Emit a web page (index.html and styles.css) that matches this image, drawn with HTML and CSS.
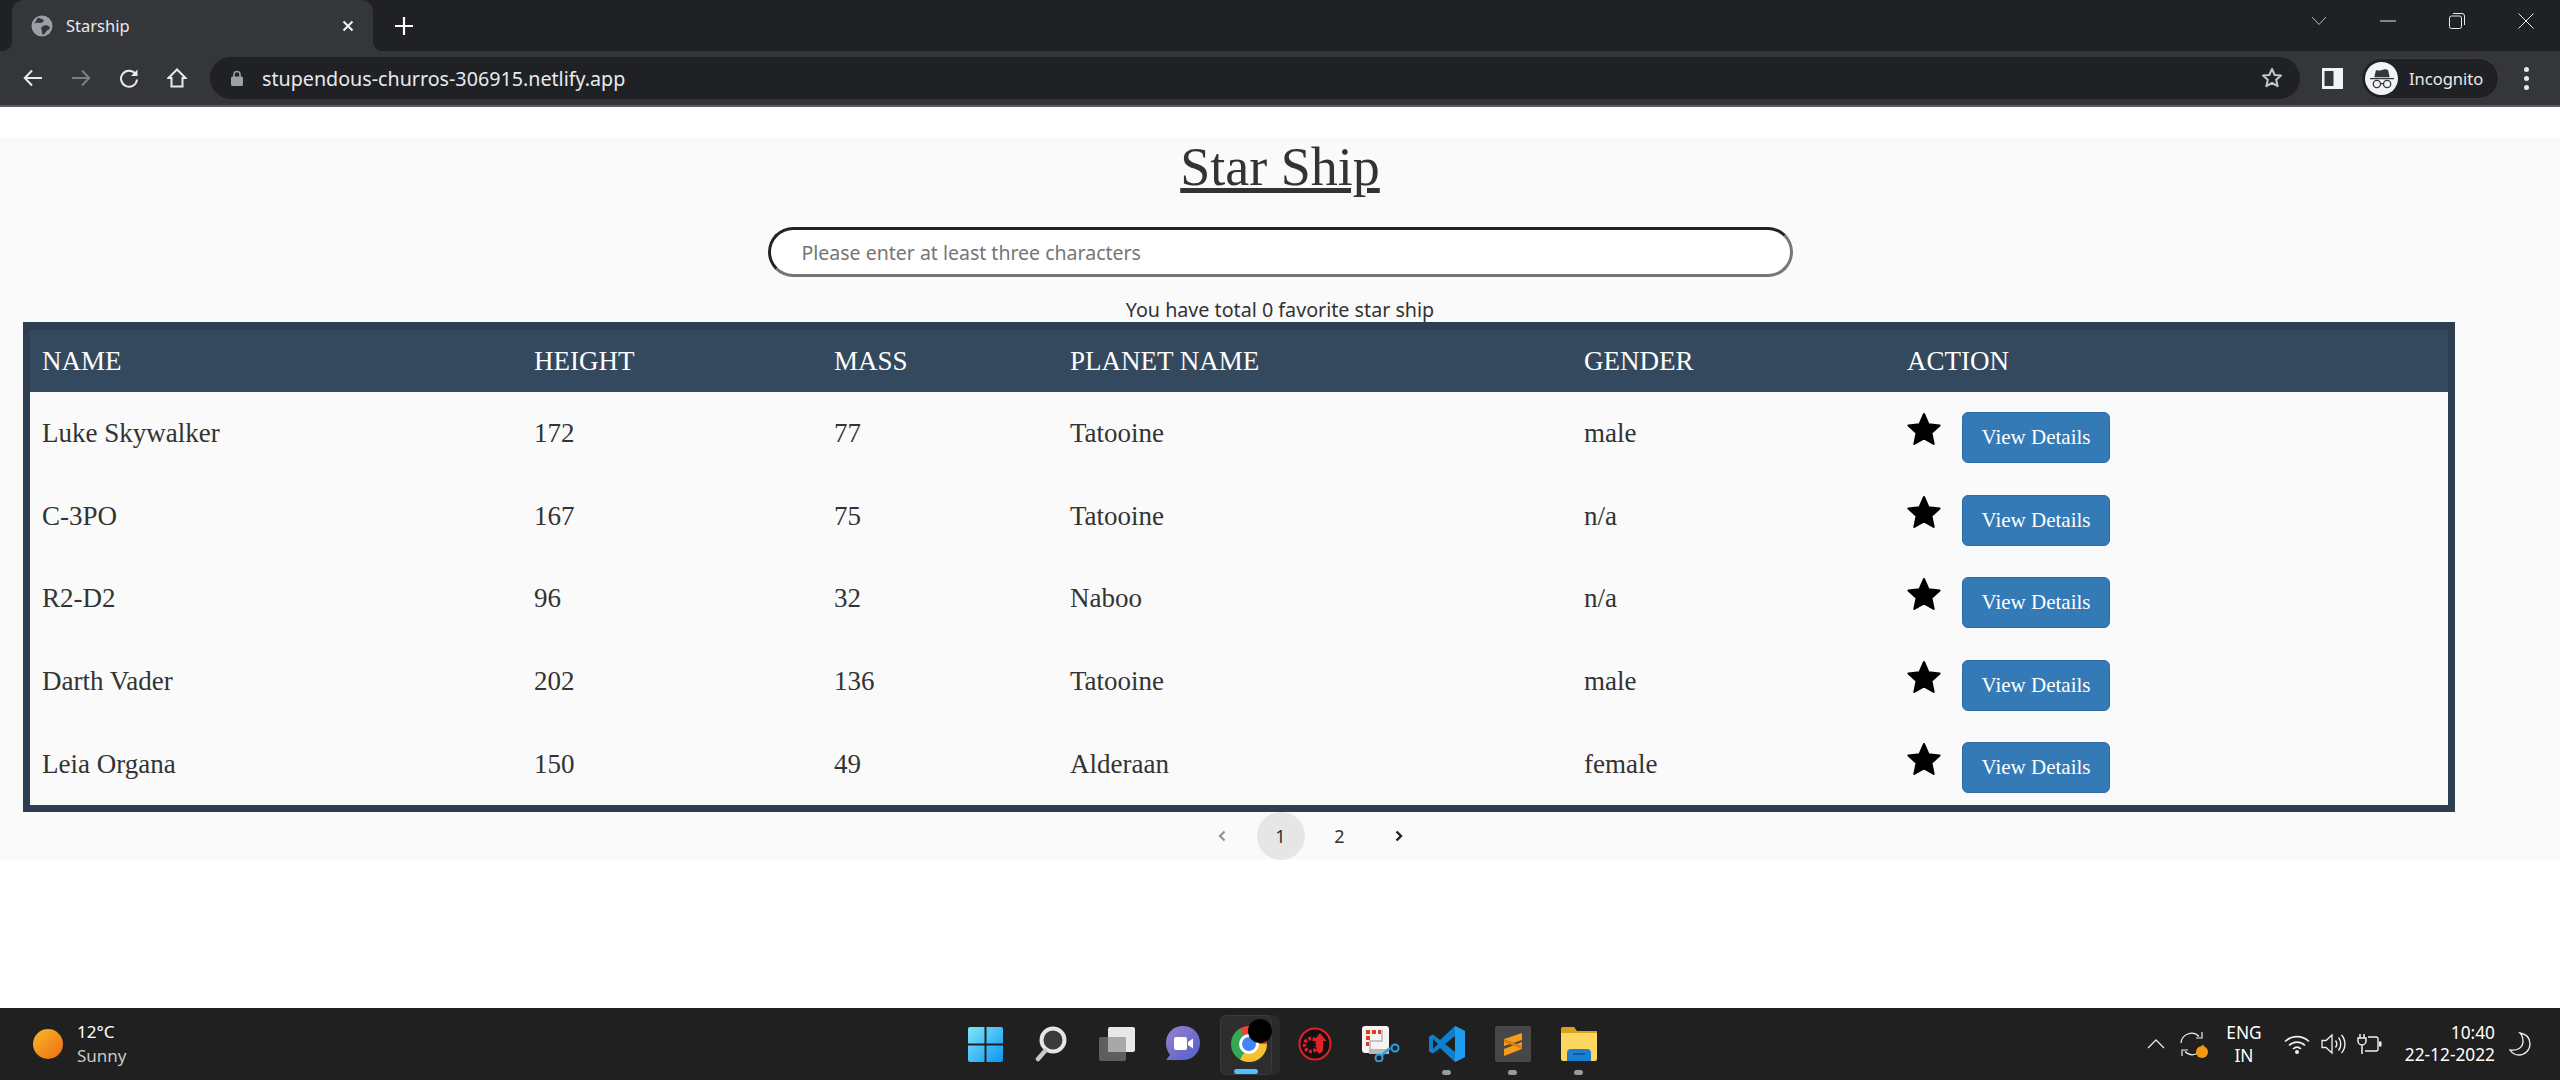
FILE: index.html
```html
<!DOCTYPE html>
<html lang="en">
<head>
  <meta charset="UTF-8" />
  <title>Starship</title>
  <link rel="stylesheet" href="styles.css">
</head>
<body>

  <!-- browser chrome -->
  <header class="browser">
    <div class="tab-strip">
      <div class="tab">
        <svg class="tab-globe" width="22" height="22" viewBox="0 0 22 22"><circle cx="11" cy="11" r="10.5" fill="#9aa0a6"/><path d="M7 2.5c2 1.5 4 1 5.5 2.5S10 8.5 8 8 3 8.5 2.5 10M12 11c2-1 5-1 6.5 1s-2 3-3 4-2 4-3.5 3.5-.5-3-1.5-4.5 0-3.500 1.500-4z" fill="#35363a"/></svg>
        <span class="tab-title">Starship</span>
        <svg class="tab-close" width="12" height="12" viewBox="0 0 12 12"><path d="M1.5 1.5l9 9m0-9l-9 9" stroke="#f1f3f4" stroke-width="2"/></svg>
      </div>
      <div class="new-tab">
        <svg width="18" height="18" viewBox="0 0 18 18"><path d="M9 0v18M0 9h18" stroke="#fff" stroke-width="2.2"/></svg>
      </div>
      <div class="win-controls">
        <span class="win-btn"><svg width="16" height="10" viewBox="0 0 16 10"><path d="M1 1l7 7.5L15 1" fill="none" stroke="#b8babd" stroke-width="1"/></svg></span>
        <span class="win-btn"><svg width="16" height="2" viewBox="0 0 16 2"><path d="M0 1h16" stroke="#e8eaed" stroke-width="1"/></svg></span>
        <span class="win-btn"><svg width="16" height="16" viewBox="0 0 16 16"><rect x=".5" y="3" width="12" height="12.5" rx="2" fill="none" stroke="#e8eaed"/><path d="M4 .5h9a2.5 2.5 0 0 1 2.5 2.5v9" fill="none" stroke="#e8eaed"/></svg></span>
        <span class="win-btn"><svg width="16" height="16" viewBox="0 0 16 16"><path d="M.5.5l15 15m0-15l-15 15" stroke="#e8eaed" stroke-width="1"/></svg></span>
      </div>
    </div>
    <div class="toolbar">
      <div class="nav-btns">
        <span class="nav-btn"><svg width="20" height="20" viewBox="0 0 20 20"><path d="M19 10H2m7-7.5L1.800 10 9 17.500" fill="none" stroke="#e8eaed" stroke-width="2"/></svg></span>
        <span class="nav-btn"><svg width="20" height="20" viewBox="0 0 20 20"><path d="M1 10h17m-7-7.5l7.2 7.5-7.2 7.5" fill="none" stroke="#7c7e82" stroke-width="2"/></svg></span>
        <span class="nav-btn"><svg width="20" height="20" viewBox="0 0 20 20"><path d="M16.5 6A8 8 0 1 0 18 11.5" fill="none" stroke="#e8eaed" stroke-width="2"/><path d="M18.5 1.5V8H12z" fill="#e8eaed"/></svg></span>
        <span class="nav-btn"><svg width="20" height="20" viewBox="0 0 20 20"><path d="M10 1.5L1.5 10h3v8.5h11V10h3z" fill="none" stroke="#e8eaed" stroke-width="2"/></svg></span>
      </div>
      <div class="omnibox">
        <svg class="lock" width="12" height="16" viewBox="0 0 12 16"><path d="M3 7V4.5a3 3 0 0 1 6 0V7" fill="none" stroke="#9aa0a6" stroke-width="1.6"/><rect y="6.5" width="12" height="9.5" rx="1.5" fill="#9aa0a6"/></svg>
        <span class="url">stupendous-churros-306915.netlify.app</span>
        <svg class="bookmark" width="22" height="22" viewBox="0 0 22 22"><path d="M11 2l2.700 6 6.300.6-4.800 4.200 1.400 6.400L11 15.900l-5.600 3.300 1.400-6.400L2 8.600 8.300 8z" fill="none" stroke="#c4c7c5" stroke-width="2" stroke-linejoin="round"/></svg>
      </div>
      <div class="toolbar-right">
        <svg class="side-panel" width="21" height="21" viewBox="0 0 21 21"><rect width="21" height="21" fill="#f1f3f4"/><rect x="2.5" y="3" width="9" height="15" fill="#35363a"/></svg>
        <div class="incognito">
          <span class="avatar">
            <svg width="28" height="24" viewBox="0 0 28 24"><path d="M0 11.5h28v1.5H0zM5 10.5l2-8.500c2.500 1 4 1 7 0s4.500-1 7 0l2 8.500z" fill="#35363a"/><circle cx="8" cy="18.500" r="4.200" fill="none" stroke="#35363a" stroke-width="1.5"/><circle cx="20" cy="18.500" r="4.200" fill="none" stroke="#35363a" stroke-width="1.5"/><path d="M12 18h4" stroke="#35363a" stroke-width="1.5"/></svg>
          </span>
          <span class="incognito-label">Incognito</span>
        </div>
        <span class="menu-dots"><i></i><i></i><i></i></span>
      </div>
    </div>
  </header>

  <main class="page">
    <h1 class="page-title">Star Ship</h1>
    <input class="search" type="text" placeholder="Please enter at least three characters" />
    <p class="fav-count">You have total 0 favorite star ship</p>

    <table class="ship-table">
      <thead>
        <tr>
          <th class="col-name">NAME</th>
          <th class="col-height">HEIGHT</th>
          <th class="col-mass">MASS</th>
          <th class="col-planet">PLANET NAME</th>
          <th class="col-gender">GENDER</th>
          <th class="col-action">ACTION</th>
        </tr>
      </thead>
      <tbody>
        <tr>
          <td>Luke Skywalker</td><td>172</td><td>77</td><td>Tatooine</td><td>male</td>
          <td class="action-cell"><div class="action-row"><svg class="star" viewBox="0 0 36 36"><path d="M18 3l4.600 10.300 11 1.200-8.200 7.500 2.300 11L18 27.400 8.300 33l2.300-11-8.200-7.500 11-1.200z"/></svg><button class="details-btn">View Details</button></div></td>
        </tr>
        <tr>
          <td>C-3PO</td><td>167</td><td>75</td><td>Tatooine</td><td>n/a</td>
          <td class="action-cell"><div class="action-row"><svg class="star" viewBox="0 0 36 36"><path d="M18 3l4.600 10.300 11 1.200-8.200 7.500 2.300 11L18 27.400 8.300 33l2.300-11-8.200-7.500 11-1.200z"/></svg><button class="details-btn">View Details</button></div></td>
        </tr>
        <tr>
          <td>R2-D2</td><td>96</td><td>32</td><td>Naboo</td><td>n/a</td>
          <td class="action-cell"><div class="action-row"><svg class="star" viewBox="0 0 36 36"><path d="M18 3l4.600 10.300 11 1.200-8.200 7.500 2.300 11L18 27.400 8.300 33l2.300-11-8.200-7.500 11-1.200z"/></svg><button class="details-btn">View Details</button></div></td>
        </tr>
        <tr>
          <td>Darth Vader</td><td>202</td><td>136</td><td>Tatooine</td><td>male</td>
          <td class="action-cell"><div class="action-row"><svg class="star" viewBox="0 0 36 36"><path d="M18 3l4.600 10.300 11 1.200-8.200 7.500 2.300 11L18 27.400 8.300 33l2.300-11-8.200-7.500 11-1.200z"/></svg><button class="details-btn">View Details</button></div></td>
        </tr>
        <tr>
          <td>Leia Organa</td><td>150</td><td>49</td><td>Alderaan</td><td>female</td>
          <td class="action-cell"><div class="action-row"><svg class="star" viewBox="0 0 36 36"><path d="M18 3l4.600 10.300 11 1.200-8.200 7.500 2.300 11L18 27.400 8.300 33l2.300-11-8.200-7.500 11-1.200z"/></svg><button class="details-btn">View Details</button></div></td>
        </tr>
      </tbody>
    </table>

    <nav class="pager">
      <span class="pager-item"><svg width="10" height="12" viewBox="0 0 10 12"><path d="M7.5 1.5L3 6l4.500 4.500" fill="none" stroke="#949494" stroke-width="2.2"/></svg></span>
      <span class="pager-item active">1</span>
      <span class="pager-item">2</span>
      <span class="pager-item"><svg width="10" height="12" viewBox="0 0 10 12"><path d="M2.5 1.5L7 6l-4.500 4.500" fill="none" stroke="#222" stroke-width="2.4"/></svg></span>
    </nav>
  </main>

  <!-- windows taskbar -->
  <footer class="taskbar">
    <div class="weather">
      <span class="sun"></span>
      <div class="weather-text">
        <span class="temp">12°C</span>
        <span class="sky">Sunny</span>
      </div>
    </div>

    <div class="tb-icons">
      <span class="tb-icon">
        <svg width="35" height="35" viewBox="0 0 35 35"><defs><linearGradient id="win" x1="0" y1="0" x2="1" y2="1"><stop offset="0" stop-color="#7fe6fb"/><stop offset="1" stop-color="#0d95f0"/></linearGradient></defs><path d="M0 2a2 2 0 0 1 2-2h14.500v16.500H0zM18.500 0H33a2 2 0 0 1 2 2v14.500H18.500zM0 18.500h16.500V35H2a2 2 0 0 1-2-2zM18.500 18.500H35V33a2 2 0 0 1-2 2H18.500z" fill="url(#win)"/></svg>
      </span>
      <span class="tb-icon">
        <svg width="32" height="36" viewBox="0 0 32 36"><circle cx="18" cy="14" r="11.5" fill="#3a3a3a" stroke="#e6e6e6" stroke-width="4"/><path d="M10 25L3 33" stroke="#c8c8c8" stroke-width="4.5" stroke-linecap="round"/></svg>
      </span>
      <span class="tb-icon">
        <svg width="36" height="34" viewBox="0 0 36 34"><rect x="0" y="10" width="27" height="24" rx="2" fill="#5e5e5e"/><rect x="9" y="0" width="27" height="25" rx="2" fill="#e8e8e8"/><rect x="9" y="10" width="18" height="15" fill="#a8a8a8"/></svg>
      </span>
      <span class="tb-icon">
        <svg width="36" height="36" viewBox="0 0 36 36"><defs><linearGradient id="chat" x1="0" y1="0" x2="1" y2="1"><stop offset="0" stop-color="#9a80cf"/><stop offset="1" stop-color="#4f5fc9"/></linearGradient></defs><path d="M18 0c10 0 17 7.500 17 17s-7 17-17 17H1l4-5C2 25 1 21 1 17 1 7.500 8 0 18 0z" fill="url(#chat)"/><rect x="9" y="11" width="13" height="13" rx="2" fill="#fff"/><path d="M23 16l5-3.500v10L23 19z" fill="#fff"/></svg>
      </span>
      <span class="tb-icon active-app">
        <span class="tile-back"></span>
        <span class="tile"></span>
        <span class="chrome-logo"><span class="chrome-core"></span></span>
        <span class="notif-blob"></span>
        <span class="run-bar"></span>
      </span>
      <span class="tb-icon">
        <svg width="34" height="34" viewBox="0 0 34 34"><circle cx="17" cy="17" r="15.5" fill="#111" stroke="#e0202a" stroke-width="2"/><circle cx="13" cy="18" r="6.5" fill="none" stroke="#e0202a" stroke-width="3.5" stroke-dasharray="3 1.5"/><path d="M22 6l6.500 8H25v10l-3.500 3-3-3V14h-3z" fill="#e0202a"/></svg>
      </span>
      <span class="tb-icon">
        <svg width="38" height="36" viewBox="0 0 38 36"><rect width="27" height="27" rx="3" fill="#f4f4f4"/><path d="M4 4h4v4H4zM10 4h4v4h-4zM16 4h4v4h-4zM4 10h4v4H4zM4 16h4v4H4z" fill="#dd3d1a"/><path d="M8 23V15h12V4" fill="none" stroke="#c4c4c4" stroke-width="2"/><path d="M7 23h20v5H7z" fill="#b8b8b8"/><path d="M18 36l2-7 8-7" fill="none" stroke="#27a0e6" stroke-width="2.5"/><circle cx="33" cy="22" r="3.5" fill="#202020" stroke="#27a0e6" stroke-width="2"/><circle cx="17" cy="32" r="3.5" fill="#202020" stroke="#27a0e6" stroke-width="2"/></svg>
      </span>
      <span class="tb-icon running">
        <svg width="36" height="36" viewBox="0 0 36 36"><path d="M26 0l10 5v26l-10 5-15-14-7 5.500-4-2v-15l4-2 7 5.500z" fill="#0d7fcb"/><path d="M26 0l10 5v26l-10 5z" fill="#1f9cf0"/><path d="M26 10l-10 8 10 8z" fill="#202020"/><path d="M4 13v10l5-5z" fill="#202020"/></svg>
      </span>
      <span class="tb-icon running">
        <svg width="36" height="36" viewBox="0 0 36 36"><rect width="36" height="36" rx="2" fill="#474747"/><path d="M27 7v7L9 20v-7zM27 16v7L9 30v-7l9-3.500z" fill="#f89a1c"/><path d="M9 13l18 7v3L9 16z" fill="#d97f0c"/></svg>
      </span>
      <span class="tb-icon running">
        <svg width="36" height="34" viewBox="0 0 36 34"><path d="M0 2a2 2 0 0 1 2-2h11l3 4h20v8H0z" fill="#d9a21c"/><path d="M0 6h36v26a2 2 0 0 1-2 2H2a2 2 0 0 1-2-2z" fill="#fdd65f"/><path d="M6 34V26a4 4 0 0 1 4-4h16a4 4 0 0 1 4 4v8z" fill="#1a7fd0"/><path d="M12 27h12" stroke="#0d5c9e" stroke-width="2"/></svg>
      </span>
    </div>

    <div class="tray">
      <svg class="tray-chevron" width="18" height="10" viewBox="0 0 18 10"><path d="M1 9l8-8 8 8" fill="none" stroke="#e6e6e6" stroke-width="1.3"/></svg>
      <span class="sync">
        <svg width="24" height="26" viewBox="0 0 24 26"><path d="M1 12a10.500 10.500 0 0 1 18-6.500M23 14a10.500 10.500 0 0 1-18 6.500" fill="none" stroke="#f0f0f0" stroke-width="1.2"/><path d="M22 1v6h-6M2 25v-6h6" fill="none" stroke="#f0f0f0" stroke-width="1.2"/></svg>
        <i class="sync-dot"></i>
      </span>
      <div class="lang"><span>ENG</span><span>IN</span></div>
      <svg class="tray-wifi" width="26" height="20" viewBox="0 0 26 20"><path d="M1 7.500c7-6.500 17-6.500 24 0M5 11.500c4.500-4.500 11.500-4.500 16 0M9 15c2.500-2.300 5.500-2.300 8 0" fill="none" stroke="#f0f0f0" stroke-width="1.6"/><circle cx="13" cy="18" r="2" fill="#f0f0f0"/></svg>
      <svg class="tray-vol" width="25" height="22" viewBox="0 0 25 22"><path d="M1 7.500h4L11 2v18l-6-5.500H1z" fill="none" stroke="#f0f0f0" stroke-width="1.3"/><path d="M14.500 7.500c1.500 2 1.500 5 0 7M17.500 4.500c3 3.500 3 9.500 0 13M20.500 2c4.500 5 4.500 13 0 18" fill="none" stroke="#f0f0f0" stroke-width="1.4"/></svg>
      <svg class="tray-batt" width="25" height="22" viewBox="0 0 25 22"><path d="M3 1v4M7 1v4M1 5h8v3a4 4 0 0 1-8 0zM5 12v9" fill="none" stroke="#f0f0f0" stroke-width="1.5"/><path d="M11 4h8a2 2 0 0 1 2 2v10a2 2 0 0 1-2 2H8" fill="none" stroke="#f0f0f0" stroke-width="1.4"/><rect x="22" y="8.500" width="2.500" height="5" fill="#f0f0f0"/></svg>
      <div class="clock"><span>10:40</span><span>22-12-2022</span></div>
      <svg class="tray-moon" width="22" height="24" viewBox="0 0 22 24"><path d="M11 1c6 1 10 5 10 11s-5 11-11 11c-4 0-7-2-9-5 7 1 13-2 13-9 0-3-1-6-3-8z" fill="none" stroke="#f0f0f0" stroke-width="1.3"/></svg>
    </div>
  </footer>

</body>
</html>
```

FILE: styles.css
```css
:root {
  --chrome-dark: #202124;
  --chrome-mid: #35363a;
  --table-border: #2c3e50;
  --table-head: #34495e;
  --page-gray: #fafafa;
  --text-dark: #333;
  --btn-blue: #337ab7;
}
body {
  margin: 0;
  height: 1080px;
  overflow: hidden;
  background-color: #fff;
  color: var(--text-dark);
  font-family: "Noto Sans", "Open Sans", sans-serif;
  display: flex;
  flex-direction: column;
}

/* browser chrome */
.browser {
  flex: none;
  height: 107px;
  background-color: var(--chrome-mid);
  border-bottom: 2px solid #5c5d61;
  box-sizing: border-box;
}
.tab-strip {
  height: 51px;
  background-color: var(--chrome-dark);
  display: flex;
  align-items: stretch;
  padding-left: 12px;
}
.tab {
  position: relative;
  width: 361px;
  background-color: var(--chrome-mid);
  border-radius: 12px 12px 0 0;
  display: flex;
  align-items: center;
  box-sizing: border-box;
  padding-left: 19px;
  padding-right: 19px;
}
.tab::before,
.tab::after {
  content: "";
  position: absolute;
  bottom: 0;
  width: 10px;
  height: 10px;
}
.tab::before {
  left: -10px;
  background: radial-gradient(circle at 0 0, transparent 10px, var(--chrome-mid) 10.5px);
}
.tab::after {
  right: -10px;
  background: radial-gradient(circle at 100% 0, transparent 10px, var(--chrome-mid) 10.5px);
}
.tab-globe {
  flex: none;
}
.tab-title {
  margin-left: 13px;
  font-size: 16.5px;
  color: #e8eaed;
  flex: 1;
}
.new-tab {
  margin-left: 22px;
  display: flex;
  align-items: center;
}
.win-controls {
  margin-left: auto;
  display: flex;
}
.win-btn {
  width: 69px;
  display: flex;
  align-items: center;
  justify-content: center;
  height: 42px;
}
.toolbar {
  height: 54px;
  display: flex;
  align-items: center;
  padding-left: 9px;
}
.nav-btns {
  display: flex;
  flex: none;
}
.nav-btn {
  width: 48px;
  display: flex;
  justify-content: center;
}
.omnibox {
  flex: 1;
  margin-left: 9px;
  height: 42px;
  border-radius: 21px;
  background-color: var(--chrome-dark);
  display: flex;
  align-items: center;
  padding-left: 21px;
  padding-right: 17px;
}
.url {
  margin-left: 19px;
  font-size: 19.7px;
  color: #e8eaed;
  flex: 1;
}
.toolbar-right {
  flex: none;
  width: 260px;
  display: flex;
  align-items: center;
  box-sizing: border-box;
  padding-left: 22px;
}
.incognito {
  margin-left: 18px;
  width: 138px;
  height: 41px;
  box-sizing: border-box;
  border-radius: 21px;
  background-color: var(--chrome-dark);
  border: 1px solid #3c3d41;
  display: flex;
  align-items: center;
  padding-left: 3px;
}
.avatar {
  width: 33px;
  height: 33px;
  border-radius: 50%;
  background-color: #f1f3f4;
  display: flex;
  align-items: center;
  justify-content: center;
}
.avatar svg {
  width: 24px;
  height: 21px;
}
.incognito-label {
  margin-left: 11px;
  font-size: 16.5px;
  color: #e8eaed;
}
.menu-dots {
  margin-left: 25px;
  display: flex;
  flex-direction: column;
  gap: 4px;
}
.menu-dots i {
  width: 5px;
  height: 5px;
  border-radius: 50%;
  background-color: #e8eaed;
}

/* page */
.page {
  flex: none;
  margin-top: 30px;
  height: 723px;
  background-color: var(--page-gray);
  display: flex;
  flex-direction: column;
  align-items: center;
}
.page-title {
  margin: 0;
  height: 60px;
  font-family: "Liberation Serif", serif;
  font-weight: 400;
  font-size: 54px;
  line-height: 60px;
  text-decoration: underline;
  color: var(--text-dark);
}
.search {
  margin-top: 30px;
  width: 1025px;
  height: 50px;
  box-sizing: border-box;
  border-width: 3px;
  border-style: solid;
  border-color: #222 #767676 #767676 #222;
  border-radius: 25px;
  background-color: #fff;
  padding: 0 31px;
  font-family: inherit;
  font-size: 19.5px;
  outline: none;
}
.search::placeholder {
  color: #757575;
}
.fav-count {
  margin: 20px 0 0;
  height: 25px;
  line-height: 25px;
  font-size: 19.7px;
  color: var(--text-dark);
}
.ship-table {
  align-self: flex-start;
  margin-left: 23px;
  width: 2432px;
  table-layout: fixed;
  border-collapse: separate;
  border-spacing: 0;
  border: 7px solid var(--table-border);
  border-top-width: 8px;
  font-family: "Liberation Serif", serif;
  font-size: 27px;
}
thead tr {
  height: 62px;
  background-color: var(--table-head);
  color: #fff;
}
th, td {
  padding: 0 12px;
  text-align: left;
  font-weight: 400;
}
td {
  padding-top: 1px;
}
tbody tr {
  height: 82.6px;
}
.col-name { width: 468px; }
.col-height { width: 276px; }
.col-mass { width: 212px; }
.col-planet { width: 490px; }
.col-gender { width: 299px; }
.col-action { width: 529px; }
td.action-cell {
  vertical-align: top;
  padding-top: 19px;
}
.action-row {
  display: flex;
  align-items: flex-start;
  gap: 20px;
}
.star {
  width: 36px;
  height: 36px;
  flex: none;
  margin-left: -1px;
  fill: #000;
  stroke: #000;
  stroke-width: 2;
  stroke-linejoin: round;
}
.details-btn {
  margin-top: 1px;
  width: 148px;
  height: 51px;
  box-sizing: border-box;
  border: 1px solid #2e6da4;
  border-radius: 6px;
  background-color: var(--btn-blue);
  color: #fff;
  font-family: "Liberation Serif", serif;
  font-size: 21px;
  padding: 0;
}
.pager {
  display: flex;
  gap: 11px;
  margin-left: 60px;
}
.pager-item {
  width: 48px;
  height: 48px;
  border-radius: 50%;
  display: flex;
  align-items: center;
  justify-content: center;
  font-size: 18px;
  color: #333;
}
.pager-item.active {
  background-color: #e6e6e6;
}

/* taskbar */
.taskbar {
  margin-top: auto;
  flex: none;
  height: 72px;
  background-color: #202020;
  display: flex;
  align-items: center;
  color: #fff;
}
.weather {
  width: 952px;
  flex: none;
  box-sizing: border-box;
  padding-left: 33px;
  display: flex;
  align-items: center;
  gap: 14px;
}
.sun {
  width: 30px;
  height: 30px;
  border-radius: 50%;
  background: linear-gradient(135deg, #f4bb2c, #f06a10);
}
.weather-text {
  display: flex;
  flex-direction: column;
  font-size: 17px;
  line-height: 24px;
}
.sky {
  color: #c8c8c8;
}
.tb-icons {
  display: flex;
  align-self: stretch;
}
.tb-icon {
  position: relative;
  width: 66px;
  display: flex;
  align-items: center;
  justify-content: center;
}
.tb-icon.running::after {
  content: "";
  position: absolute;
  bottom: 5px;
  left: 28px;
  width: 9px;
  height: 5px;
  border-radius: 3px;
  background-color: #9a9a9a;
}
.tile {
  position: absolute;
  left: 4px;
  top: 7px;
  width: 52px;
  height: 60px;
  background-color: #2d2d2d;
  border: 1px solid #3a3a3a;
  border-radius: 6px;
  box-sizing: border-box;
}
.tile-back {
  position: absolute;
  left: 9px;
  top: 7px;
  width: 55px;
  height: 60px;
  background-color: #2a2a2a;
  border-radius: 6px;
}
.chrome-logo {
  position: relative;
  width: 36px;
  height: 36px;
  border-radius: 50%;
  background: conic-gradient(#ea4335 0 90deg, #fbc02d 90deg 210deg, #34a853 210deg 330deg, #ea4335 330deg);
  display: flex;
  align-items: center;
  justify-content: center;
}
.chrome-core {
  width: 20px;
  height: 20px;
  border-radius: 50%;
  background-color: #4285f4;
  border: 3px solid #fff;
  box-sizing: border-box;
}
.notif-blob {
  position: absolute;
  left: 32px;
  top: 11px;
  width: 24px;
  height: 24px;
  border-radius: 50%;
  background-color: #000;
}
.run-bar {
  position: absolute;
  left: 18px;
  bottom: 6px;
  width: 24px;
  height: 5px;
  border-radius: 3px;
  background-color: #4cc2ff;
}
.tray {
  margin-left: auto;
  flex: none;
  width: 423px;
  box-sizing: border-box;
  display: flex;
  align-items: center;
  padding-left: 10px;
}
.sync {
  position: relative;
  margin-left: 15px;
  display: flex;
}
.sync-dot {
  position: absolute;
  right: -4px;
  bottom: -1px;
  width: 12px;
  height: 12px;
  border-radius: 50%;
  background-color: #f59a0c;
}
.lang {
  margin-left: 20px;
  width: 40px;
  display: flex;
  flex-direction: column;
  align-items: center;
  font-size: 17.3px;
  line-height: 23px;
}
.tray-wifi {
  margin-left: 20px;
}
.tray-vol {
  margin-left: 11px;
}
.tray-batt {
  margin-left: 11px;
}
.clock {
  margin-left: auto;
  display: flex;
  flex-direction: column;
  align-items: flex-end;
  font-size: 17.3px;
  line-height: 22px;
}
.tray-moon {
  margin-left: 14px;
  margin-right: 29px;
}
```
